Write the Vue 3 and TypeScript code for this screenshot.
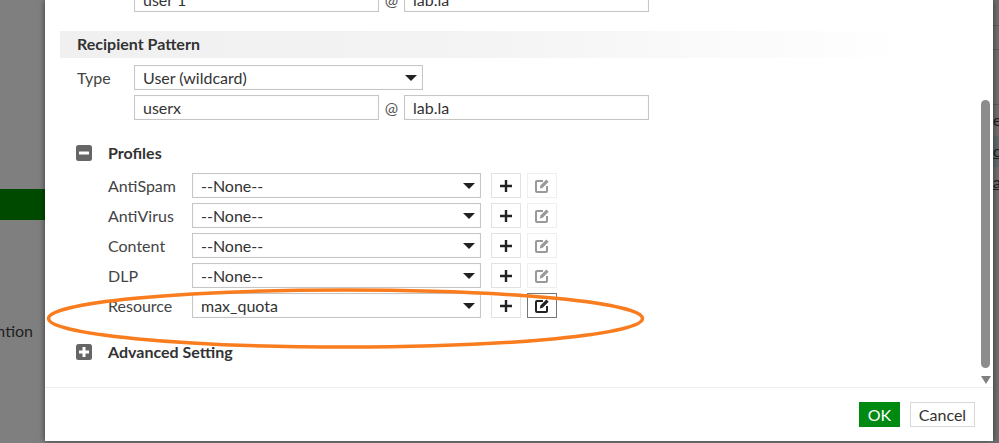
<template>
  <div class="page">
    <div class="backdrop-green"></div>
    <div class="backdrop-left-text">ntion</div>
    <div class="backdrop-right">
      <div class="bg-line" style="top: 25px"></div>
      <div class="bg-line" style="top: 49px"></div>
      <div class="bg-line" style="top: 104px"></div>
      <span class="bg-text" style="top: 110px">e</span>
      <div class="bg-row"></div>
      <span class="bg-text link" style="top: 141px">of</span>
      <span class="bg-text link" style="top: 172px">a</span>
    </div>

    <div class="modal">
      <div class="modal-body">
        <div class="address-row first">
          <div class="field name-field">user 1</div>
          <span class="at">@</span>
          <div class="field domain-field">lab.la</div>
        </div>

        <div class="section-title">Recipient Pattern</div>

        <div class="type-row">
          <label class="type-label">Type</label>
          <div class="field select type-select">
            <span>User (wildcard)</span>
            <i class="caret"></i>
          </div>
        </div>
        <div class="address-row">
          <div class="field name-field">userx</div>
          <span class="at">@</span>
          <div class="field domain-field">lab.la</div>
        </div>

        <div class="toggle-row profiles-toggle">
          <svg class="toggle-icon" viewBox="0 0 16 16">
            <rect width="16" height="16" rx="2.5" fill="#666" />
            <rect x="3" y="6.5" width="10" height="3" rx="0.5" fill="#fff" />
          </svg>
          <span class="toggle-text">Profiles</span>
        </div>

        <div class="profile-list">
          <div v-for="p in profiles" :key="p.label" class="profile-row">
            <label class="profile-label">{{ p.label }}</label>
            <div class="field select profile-select">
              <span>{{ p.value }}</span>
              <i class="caret"></i>
            </div>
            <button class="icon-btn add-btn" type="button">
              <svg viewBox="0 0 16 16" width="16" height="16">
                <path d="M8 2v12M2 8h12" stroke="#222" stroke-width="2.4" fill="none" />
              </svg>
            </button>
            <button class="icon-btn edit-btn" :class="{ active: p.editable }" type="button">
              <svg viewBox="0 0 16 16" width="16" height="16">
                <path
                  d="M9 3H3a1 1 0 0 0-1 1v9a1 1 0 0 0 1 1h9a1 1 0 0 0 1-1V8"
                  fill="none"
                  :stroke="p.editable ? '#222' : '#999'"
                  stroke-width="2"
                />
                <path
                  d="M5.8 10.4l.6-2.9L12.4 1.5l2.3 2.3-6 6z"
                  :fill="p.editable ? '#222' : '#999'"
                />
              </svg>
            </button>
          </div>
        </div>

        <div class="toggle-row advanced-toggle">
          <svg class="toggle-icon" viewBox="0 0 16 16">
            <rect width="16" height="16" rx="2.5" fill="#666" />
            <path d="M8 3v10M3 8h10" stroke="#fff" stroke-width="3" fill="none" />
          </svg>
          <span class="toggle-text">Advanced Setting</span>
        </div>

        <div class="scrollbar">
          <div class="scroll-thumb"></div>
          <i class="scroll-arrow"></i>
        </div>
      </div>

      <div class="modal-footer">
        <button class="btn ok" type="button">OK</button>
        <button class="btn cancel" type="button">Cancel</button>
      </div>
    </div>

    <!-- hand drawn highlight on top of the screenshot -->
    <svg class="highlight" viewBox="0 0 999 443" width="999" height="443">
      <ellipse cx="345.5" cy="318.5" rx="297" ry="28.5" fill="none" stroke="#f97c1e" stroke-width="3.5" />
    </svg>
  </div>
</template>

<script setup lang="ts">
interface ProfileRow {
  label: string;
  value: string;
  editable: boolean;
}

const profiles: ProfileRow[] = [
  { label: "AntiSpam", value: "--None--", editable: false },
  { label: "AntiVirus", value: "--None--", editable: false },
  { label: "Content", value: "--None--", editable: false },
  { label: "DLP", value: "--None--", editable: false },
  { label: "Resource", value: "max_quota", editable: true },
];
</script>

<style>
html,
body {
  margin: 0;
  overflow: hidden;
}
</style>

<style scoped>
.page {
  position: relative;
  width: 999px;
  height: 443px;
  overflow: hidden;
  background: #7f7f7f;
  font-family: Lato, "Liberation Sans", sans-serif;
  font-size: 16px;
  color: #333;
}

.backdrop-green {
  position: absolute;
  left: 0;
  top: 189px;
  width: 45px;
  height: 31px;
  background: #004a00;
}

.backdrop-left-text {
  position: absolute;
  right: 966px;
  top: 321px;
  line-height: 20px;
  color: #222;
}

.backdrop-right {
  position: absolute;
  left: 993px;
  top: 0;
  width: 6px;
  height: 443px;
  overflow: hidden;
  background: #6f6f6f;
}

.bg-line {
  position: absolute;
  left: 0;
  width: 6px;
  height: 1px;
  background: #5c5c5c;
}

.bg-row {
  position: absolute;
  left: 0;
  top: 136px;
  width: 6px;
  height: 31px;
  background: #5f6b6b;
}

.bg-text {
  position: absolute;
  left: 0;
  line-height: 20px;
  color: #222;
}

.bg-text.link {
  text-decoration: underline;
}

.modal {
  position: absolute;
  left: 45px;
  top: 0;
  width: 948px;
  height: 441px;
  display: flex;
  flex-direction: column;
  background: #fff;
  overflow: hidden;
  box-shadow: 0 0 6px rgba(0, 0, 0, 0.55);
}

.modal-body {
  position: relative;
  flex: 1;
  padding-left: 15px;
}

.address-row {
  display: flex;
  align-items: center;
  margin-top: 5px;
  padding-left: 74px;
}

.address-row.first {
  margin-top: -13px;
}

.field {
  box-sizing: border-box;
  height: 25px;
  line-height: 23px;
  padding-left: 8px;
  border: 1px solid #c6c6c6;
  box-shadow: inset 0 0 1px #ddd;
  background: #fff;
}

.name-field {
  width: 245px;
}

.at {
  width: 25px;
  text-align: center;
  color: #555;
}

.domain-field {
  width: 245px;
}

.section-title {
  margin-top: 19px;
  width: 850px;
  height: 27px;
  line-height: 25px;
  padding-left: 17px;
  box-sizing: border-box;
  font-weight: 700;
  color: #333;
  background: linear-gradient(to right, #f0f0f0, #f3f3f3 45%, #fff);
}

.type-row {
  display: flex;
  align-items: center;
  margin-top: 7px;
}

.type-label {
  width: 74px;
  padding-left: 17px;
  box-sizing: border-box;
  color: #444;
}

.select {
  display: flex;
  align-items: center;
  justify-content: space-between;
  padding-right: 5px;
}

.type-select {
  width: 289px;
}

.caret {
  width: 0;
  height: 0;
  border-left: 6px solid transparent;
  border-right: 6px solid transparent;
  border-top: 6px solid #222;
}

.toggle-row {
  display: flex;
  align-items: center;
  gap: 16px;
  height: 16px;
  padding-left: 16px;
  font-weight: 700;
  color: #333;
}

.toggle-text {
  padding-bottom: 2px;
}

.profiles-toggle {
  margin-top: 25px;
}

.advanced-toggle {
  margin-top: 26px;
}

.toggle-icon {
  width: 16px;
  height: 16px;
  flex: none;
}

.profile-list {
  display: flex;
  flex-direction: column;
  gap: 5px;
  margin-top: 12px;
}

.profile-row {
  display: flex;
  align-items: center;
  height: 25px;
}

.profile-label {
  width: 132px;
  padding-left: 48px;
  box-sizing: border-box;
  color: #444;
}

.profile-select {
  width: 289px;
}

.icon-btn {
  display: flex;
  align-items: center;
  justify-content: center;
  box-sizing: border-box;
  width: 30px;
  height: 25px;
  padding: 0;
  background: #fff;
  border: 1px solid #e2e2e2;
}

.add-btn {
  margin-left: 10px;
}

.edit-btn {
  margin-left: 6px;
  border-color: #efefef;
}

.edit-btn.active {
  border-color: #777;
}

.scrollbar {
  position: absolute;
  left: 936px;
  top: 100px;
  width: 9px;
}

.scroll-thumb {
  height: 268px;
  border-radius: 5px;
  background: #8c8c8c;
}

.scroll-arrow {
  display: block;
  width: 0;
  height: 0;
  margin: 8px 0 0 -0.5px;
  border-left: 5px solid transparent;
  border-right: 5px solid transparent;
  border-top: 8px solid #808080;
}

.modal-footer {
  display: flex;
  justify-content: flex-end;
  gap: 10px;
  height: 54px;
  padding: 14px 18px 0 0;
  box-sizing: border-box;
  border-top: 1px solid #eee;
}

.btn {
  box-sizing: border-box;
  height: 25px;
  padding: 0;
  font-family: inherit;
  font-size: 16px;
  line-height: 23px;
}

.btn.ok {
  width: 41px;
  color: #fff;
  background: #008a12;
  border: 1px solid #008a12;
}

.btn.cancel {
  width: 65px;
  color: #333;
  background: #fff;
  border: 1px solid #d8d8d8;
}

.highlight {
  position: absolute;
  left: 0;
  top: 0;
  pointer-events: none;
}
</style>
